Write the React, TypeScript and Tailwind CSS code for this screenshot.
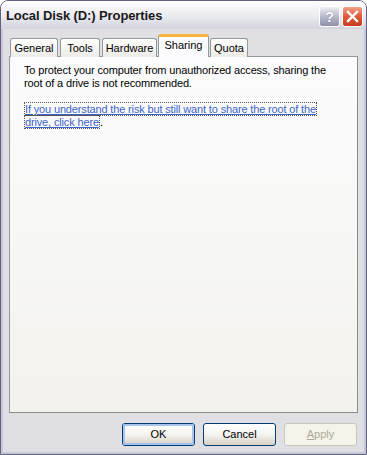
import { useState } from "react";

const tabs = [
    { label: "General", width: "w-[48px]" },
    { label: "Tools", width: "w-[40px]" },
    { label: "Hardware", width: "w-[55px]" },
    { label: "Sharing", width: "w-[51px]" },
    { label: "Quota", width: "w-[38px]" },
];

function Tab({ label, width, selected, onClick }: { label: string; width: string; selected: boolean; onClick: () => void }) {
    if (selected) {
        return (
            <button
                onClick={onClick}
                className={`${width} h-[23px] -mx-[1px] z-10 relative rounded-t-[3px] border-x border-[#919b9c] border-t-[3px] border-t-[#f7b33c] bg-[#fcfcfe] text-[11px] text-black leading-none pb-[4px]`}
            >
                {label}
            </button>
        );
    }
    return (
        <button
            onClick={onClick}
            className={`${width} h-[19px] rounded-t-[3px] border border-b-0 border-[#919b9c] bg-gradient-to-b from-[#ffffff] to-[#ecebe6] text-[11px] text-black leading-none pt-[1px]`}
        >
            {label}
        </button>
    );
}

function XpButton({ label, focused, disabled }: { label: string; focused?: boolean; disabled?: boolean }) {
    if (disabled) {
        return (
            <button className="w-[73px] h-[23px] rounded-[3px] border border-[#c9c7ba] bg-[#f5f4ea] text-[11px] text-[#aca899]">
                <span className="underline">A</span>pply
            </button>
        );
    }
    return (
        <button className="w-[73px] h-[23px] rounded-[3px] border border-[#003c74] bg-gradient-to-b from-[#ffffff] via-[#f4f4f0] to-[#d6d0c5] p-0 text-[11px] text-black">
            <span
                className={`flex h-full w-full items-center justify-center rounded-[2px] border-2 ${focused ? "border-[#a8c4ee]" : "border-transparent"}`}
            >
                {label}
            </span>
        </button>
    );
}

export default function App() {
    const [active, setActive] = useState("Sharing");

    return (
        <div className="w-[367px] h-[455px] bg-white font-['Liberation_Sans',Arial,sans-serif]">
            <div className="h-full flex flex-col rounded-t-[8px] border border-[#62617f] overflow-hidden">
                {/* title bar */}
                <div className="h-[28px] flex items-center pl-[5px] pr-[3px] bg-gradient-to-b from-[#fefefe] via-[#ececf1] to-[#d3d3de]">
                    <span className="flex-1 text-[13px] font-bold text-[#1a1a1a] tracking-[-0.1px] pt-[2px]">Local Disk (D:) Properties</span>
                    <button className="w-[21px] h-[21px] mt-[2px] rounded-[3px] border border-white bg-gradient-to-b from-[#eeeef5] via-[#b9b9cc] to-[#8f8fa8] flex items-center justify-center text-[15px] font-bold text-white leading-none [text-shadow:0_0_1px_#55556e]">
                        ?
                    </button>
                    <button className="w-[21px] h-[21px] mt-[2px] ml-[2px] rounded-[3px] border border-white bg-gradient-to-b from-[#f1a088] via-[#e0583a] to-[#c33d20] flex items-center justify-center">
                        <svg width="13" height="13" viewBox="0 0 13 13">
                            <path d="M2 2 L11 11 M11 2 L2 11" stroke="white" strokeWidth="2.4" strokeLinecap="square" />
                        </svg>
                    </button>
                </div>

                {/* dialog body */}
                <div className="flex-1 border-x-2 border-b-2 border-[#c8c7d8] bg-[#e0dfe3] px-[6px] pt-[6px]">
                    <div className="flex items-end h-[22px] pl-[1px] gap-[2px] relative z-10 -mb-px">
                        {tabs.map((t) => (
                            <Tab key={t.label} label={t.label} width={t.width} selected={active === t.label} onClick={() => setActive(t.label)} />
                        ))}
                    </div>
                    <div className="h-[357px] border border-[#919b9c] border-r-[#8c8c88] border-b-[#8c8c88] bg-gradient-to-b from-[#fcfcfe] to-[#f3f2ec] pl-[14px] pr-[10px] pt-[7px] text-[11px] leading-[13px] tracking-[-0.15px] text-black">
                        <p>
                            To protect your computer from unauthorized access, sharing the
                            <br />
                            root of a drive is not recommended.
                        </p>
                        <p className="mt-[13px]">
                            <a href="#" className="text-[#3c63c8] underline border border-dotted border-[#555] box-decoration-clone">
                                If you understand the risk but still want to share the root of the
                                <br />
                                drive, click here
                            </a>
                            .
                        </p>
                    </div>
                    <div className="flex justify-end gap-[8px] mt-[10px] pr-[1px]">
                        <XpButton label="OK" focused />
                        <XpButton label="Cancel" />
                        <XpButton label="Apply" disabled />
                    </div>
                </div>
            </div>
        </div>
    );
}
